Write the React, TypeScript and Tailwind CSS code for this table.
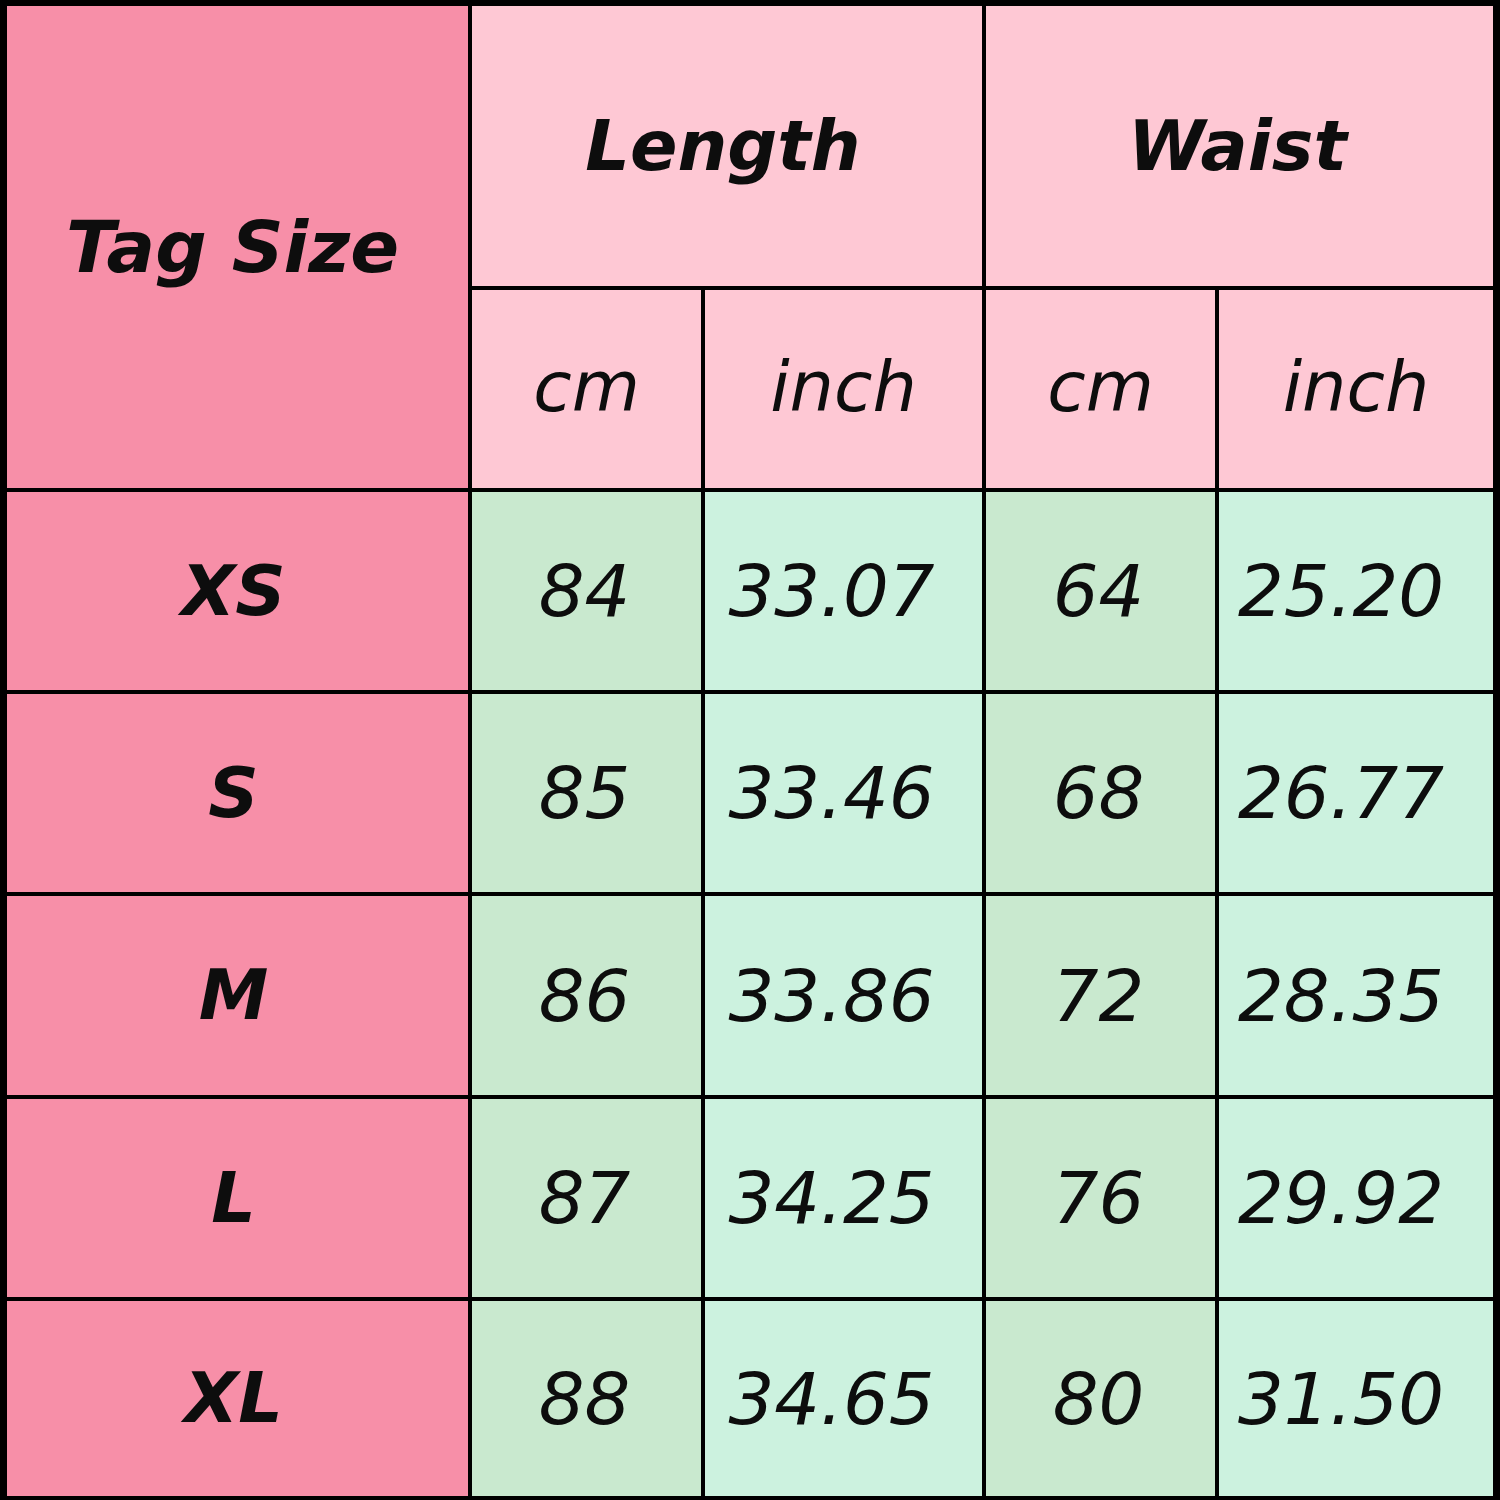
const rows = [
	{ size: "XS", lenCm: "84", lenIn: "33.07", waistCm: "64", waistIn: "25.20" },
	{ size: "S", lenCm: "85", lenIn: "33.46", waistCm: "68", waistIn: "26.77" },
	{ size: "M", lenCm: "86", lenIn: "33.86", waistCm: "72", waistIn: "28.35" },
	{ size: "L", lenCm: "87", lenIn: "34.25", waistCm: "76", waistIn: "29.92" },
	{ size: "XL", lenCm: "88", lenIn: "34.65", waistCm: "80", waistIn: "31.50" },
];

const cell = "flex items-center justify-center";

export default function App() {
	return (
		<div className="w-[1500px] h-[1500px] bg-black pt-[6px] pl-[7px] pr-[7px] pb-[4px] font-['DejaVu_Sans',Verdana,sans-serif] text-[#0d0d0d]">
			<div className="grid h-full gap-[4px] grid-cols-[461px_229px_277px_229px_274px] grid-rows-[280px_198px_198px_198px_199px_198px_195px]">
				<div
					className={`${cell} row-span-2 bg-[#f78fa8] text-[72px] font-bold italic pr-[10px]`}
				>
					Tag Size
				</div>
				<div className={`${cell} col-span-2 bg-[#fec8d4] text-[70px] font-bold italic pr-[8px]`}>
					Length
				</div>
				<div className={`${cell} col-span-2 bg-[#fec8d4] text-[70px] font-bold italic pr-[4px]`}>
					Waist
				</div>
				<div className={`${cell} bg-[#fec8d4] text-[70px] italic pb-[4px]`}>cm</div>
				<div className={`${cell} bg-[#fec8d4] text-[70px] italic pb-[4px]`}>inch</div>
				<div className={`${cell} bg-[#fec8d4] text-[70px] italic pb-[4px]`}>cm</div>
				<div className={`${cell} bg-[#fec8d4] text-[70px] italic pb-[4px]`}>inch</div>

				{rows.map((r) => (
					<div key={r.size} className="contents">
						<div className={`${cell} bg-[#f78fa8] text-[70px] font-bold italic pr-[8px]`}>
							{r.size}
						</div>
						<div className={`${cell} bg-[#c9e9cf] text-[72px] italic pr-[4px]`}>
							{r.lenCm}
						</div>
						<div className={`${cell} bg-[#ccf2df] text-[72px] italic pr-[24px]`}>
							{r.lenIn}
						</div>
						<div className={`${cell} bg-[#c9e9cf] text-[72px] italic pr-[4px]`}>
							{r.waistCm}
						</div>
						<div className={`${cell} bg-[#ccf2df] text-[72px] italic pr-[30px]`}>
							{r.waistIn}
						</div>
					</div>
				))}
			</div>
		</div>
	);
}
